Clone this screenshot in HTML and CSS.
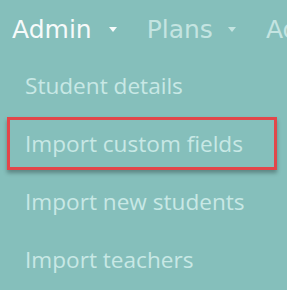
FILE: index.html
```html
<!DOCTYPE html>
<html lang="en">
<head>
    <meta charset="UTF-8">
    <meta name="viewport" content="width=device-width, initial-scale=1.0">
    <title>Admin menu</title>
    <link rel="stylesheet" href="styles.css">
</head>
<body>
    <div class="nav">
        <div class="nav-item active">Admin <span class="caret"></span></div>
        <div class="nav-item">Plans <span class="caret"></span></div>
        <div class="nav-item">Ad</div>
    </div>

    <ul class="menu">
        <li>Student details</li>
        <li class="highlight">Import custom fields</li>
        <li>Import new students</li>
        <li>Import teachers</li>
    </ul>
</body>
</html>
```

FILE: styles.css
```css
body {
    margin: 0;
    padding: 0;
    background-color: #85bfbb;
    overflow: hidden;
}

.nav {
    display: flex;
    align-items: center;
    gap: 30px;
    height: 56px;
    padding-left: 12px;
    padding-top: 2px;
    box-sizing: border-box;
    white-space: nowrap;
    font-family: "DejaVu Sans", sans-serif;
    font-size: 25px;
    color: #c4e4e1;
}

.nav-item {
    display: flex;
    align-items: center;
}

.nav-item.active {
    color: #f6fafa;
}

.caret {
    display: inline-block;
    width: 0;
    height: 0;
    margin-left: 15px;
    margin-top: 1px;
    border-left: 4px solid transparent;
    border-right: 4px solid transparent;
    border-top: 5px solid currentColor;
}

.nav-item.active .caret {
    margin-left: 17px;
}

.menu {
    list-style: none;
    margin: 3px 0 0 0;
    padding: 0 10px 0 7px;
    display: flex;
    flex-direction: column;
    gap: 5px;
    font-family: "Open Sans", sans-serif;
    font-size: 22.6px;
    color: #c8e8e5;
}

.menu li {
    height: 53px;
    box-sizing: border-box;
    border: 3px solid transparent;
    padding-left: 15px;
    display: flex;
    align-items: center;
}

.menu li.highlight {
    border-color: #e2474a;
    box-shadow: 0 3px 4px rgba(0, 0, 0, 0.3);
}
```
